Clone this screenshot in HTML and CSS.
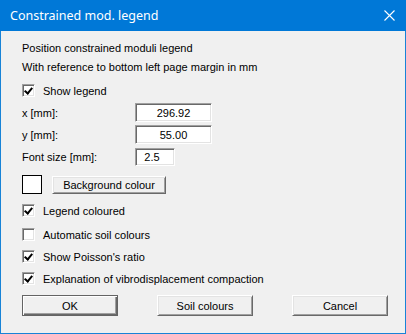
FILE: index.html
```html
<!DOCTYPE html>
<html lang="en">
<head>
    <meta charset="UTF-8">
    <title>Constrained mod. legend</title>
    <link rel="stylesheet" href="styles.css">
</head>
<body>
    <div class="window">
        <div class="titlebar">
            <span class="title">Constrained mod. legend</span>
            <svg class="close" width="11" height="11" viewBox="0 0 11 11">
                <path d="M0.5 0.5 L10.5 10.5 M10.5 0.5 L0.5 10.5" stroke="#fff" stroke-width="1.1" fill="none"/>
            </svg>
        </div>
        <div class="content">
            <div class="intro">
                <div>Position constrained moduli legend</div>
                <div>With reference to bottom left page margin in mm</div>
            </div>

            <label class="check show-legend"><span class="box checked"></span>Show legend</label>

            <div class="field field-x"><span class="lbl">x [mm]:</span><input class="num" type="text" value="296.92"></div>
            <div class="field field-y"><span class="lbl">y [mm]:</span><input class="num" type="text" value="55.00"></div>
            <div class="field field-font"><span class="lbl">Font size [mm]:</span><input class="num small" type="text" value="2.5"></div>

            <div class="bg-row">
                <span class="swatch"></span>
                <button class="btn bg-btn">Background colour</button>
            </div>

            <label class="check c1"><span class="box checked"></span>Legend coloured</label>
            <label class="check c2"><span class="box"></span>Automatic soil colours</label>
            <label class="check c3"><span class="box checked"></span>Show Poisson's ratio</label>
            <label class="check c3"><span class="box checked"></span>Explanation of vibrodisplacement compaction</label>

            <div class="actions">
                <button class="btn default">OK</button>
                <button class="btn">Soil colours</button>
                <button class="btn">Cancel</button>
            </div>
        </div>
    </div>
</body>
</html>
```

FILE: styles.css
```css
body {
    margin: 0;
    font-family: "Liberation Sans", Arial, sans-serif;
    font-size: 11px;
    color: #000;
}
.window {
    width: 406px;
    height: 334px;
    box-sizing: border-box;
    border: 1px solid #1883d7;
    border-top: none;
    background: #f0f0f0;
}
.titlebar {
    height: 31px;
    margin: 0 -1px;
    background: #0078d7;
    color: #fff;
    display: flex;
    align-items: center;
    justify-content: space-between;
    padding: 0 11px 0 10px;
}
.title {
    font-family: "Noto Sans", sans-serif;
    font-size: 12.5px;
}
.close {
    display: block;
}
.content {
    padding: 8px 0 0 21px;
}
.intro {
    line-height: 19px;
}
.check {
    display: flex;
    align-items: center;
    height: 13px;
    gap: 8px;
}
.box {
    width: 13px;
    height: 13px;
    box-sizing: border-box;
    background: #fff;
    border-top: 1px solid #a0a0a0;
    border-left: 1px solid #a0a0a0;
    border-right: 1px solid #fff;
    border-bottom: 1px solid #fff;
    box-shadow: inset 1px 1px #696969, inset -1px -1px #e3e3e3;
    position: relative;
}
.box.checked::after {
    content: "";
    position: absolute;
    left: 3px;
    top: 1px;
    width: 3px;
    height: 6px;
    border-right: 2px solid #000;
    border-bottom: 2px solid #000;
    transform: rotate(40deg);
}
.show-legend {
    margin-top: 7px;
}
.field {
    display: flex;
    align-items: center;
}
.lbl {
    width: 113px;
}
.field-x {
    margin-top: 6px;
}
.field-y {
    margin-top: 3px;
}
.field-font {
    margin-top: 4px;
}
.num {
    width: 77px;
    height: 19px;
    box-sizing: border-box;
    margin: 0;
    padding: 0;
    font: inherit;
    text-align: center;
    background: #fff;
    border-top: 1px solid #a0a0a0;
    border-left: 1px solid #a0a0a0;
    border-right: 1px solid #fff;
    border-bottom: 1px solid #fff;
    box-shadow: inset 1px 1px #696969, inset -1px -1px #e3e3e3;
    outline: none;
}
.num.small {
    width: 40px;
    height: 18px;
    padding-right: 6px;
}
.bg-row {
    display: flex;
    align-items: center;
    gap: 10px;
    margin-top: 9px;
}
.swatch {
    width: 20px;
    height: 19px;
    box-sizing: border-box;
    border: 1px solid #000;
    background: #fff;
}
.btn {
    margin: 0;
    padding: 0;
    font: inherit;
    color: #000;
    background: #f0f0f0;
    border-top: 1px solid #fff;
    border-left: 1px solid #fff;
    border-right: 1px solid #696969;
    border-bottom: 1px solid #696969;
    box-shadow: inset 1px 1px #e3e3e3, inset -1px -1px #a0a0a0;
}
.bg-btn {
    width: 114px;
    height: 18px;
}
.c1 {
    margin-top: 10px;
}
.c2 {
    margin-top: 11px;
}
.c3 {
    margin-top: 9px;
}
.actions {
    display: flex;
    gap: 39px;
    margin-top: 10px;
}
.actions .btn {
    width: 96px;
    height: 21px;
}
.btn.default {
    border: 1px solid #646464;
    box-shadow: inset 1px 1px #fff, inset -1px -1px #696969, inset -2px -2px #a0a0a0;
}
```
